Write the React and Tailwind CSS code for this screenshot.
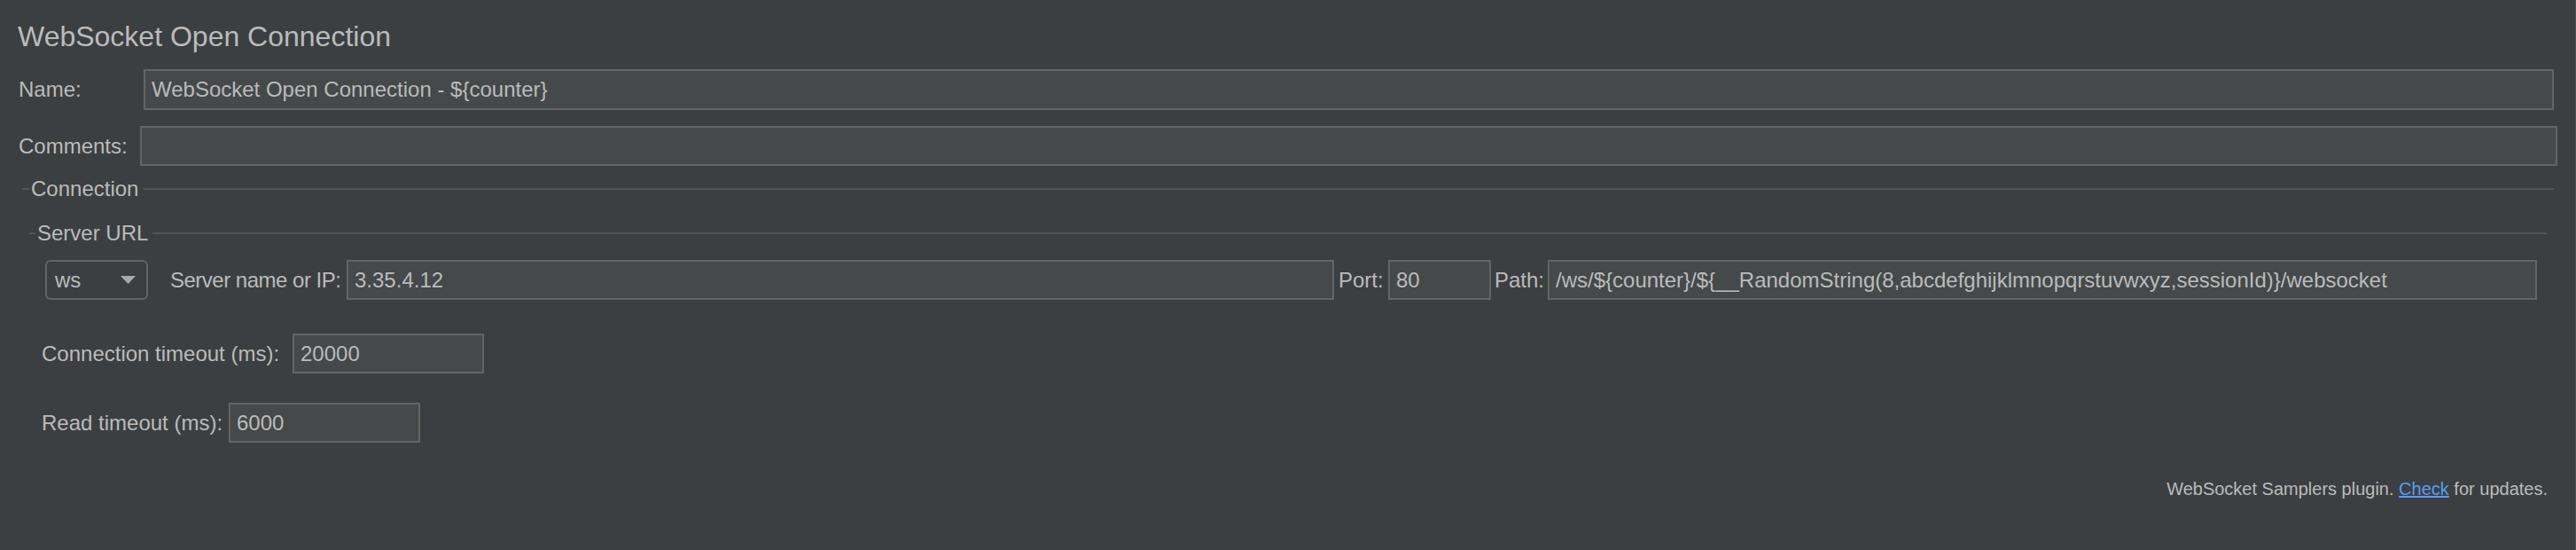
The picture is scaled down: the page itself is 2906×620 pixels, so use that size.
import React from 'react';

const font = { fontFamily: '"Liberation Sans", Arial, sans-serif' };

const Field = ({ value, className = '' }) => (
  <div className={`flex items-center h-[45px] border-2 border-[#646464] bg-[#45494a] pl-[7px] text-[24px] text-[#bbbbbb] whitespace-nowrap overflow-hidden ${className}`}>
    {value}
  </div>
);

const TitledLine = ({ title, className = '', dash = 'w-[8px]' }) => (
  <div className={`flex items-center h-[24px] ${className}`}>
    <div className={`${dash} h-[2px] bg-[#515355]`} />
    <span className="ml-[2px] text-[24px] leading-[24px] text-[#bbbbbb]">{title}</span>
    <div className="ml-[5px] flex-1 h-[2px] bg-[#515355]" />
  </div>
);

const App = () => {
  return (
    <div style={font} className="w-full h-[620px] bg-[#3c3f41] border-r border-[#4c4f51] flex flex-col text-[#bbbbbb]">
      <div className="mt-[22px] pl-[20px] h-[38px] text-[32px] leading-[38px]">WebSocket Open Connection</div>

      <div className="mt-[18px] pl-[21px] pr-[24px] flex items-center">
        <div className="w-[141px] text-[24px]">Name:</div>
        <Field className="flex-1 h-[46px]" value="WebSocket Open Connection - ${counter}" />
      </div>

      <div className="mt-[18px] pl-[21px] pr-[20px] flex items-center">
        <div className="w-[137px] text-[24px]">Comments:</div>
        <Field className="flex-1" value="" />
      </div>

      <TitledLine title="Connection" className="mt-[14px] pl-[25px] pr-[24px]" />
      <TitledLine title="Server URL" dash="w-[7px]" className="mt-[26px] pl-[33px] pr-[32px]" />

      <div className="mt-[18px] pl-[51px] flex items-center h-[45px]">
        <div className="w-[116px] h-[45px] border-2 border-[#646464] rounded-[6px] flex items-center justify-between pl-[9px] pr-[12px] text-[24px]">
          <span>ws</span>
          <svg width="17" height="10" viewBox="0 0 17 10">
            <polygon points="0,0 17,0 8.5,9" fill="#a9a9a9" />
          </svg>
        </div>
        <div className="ml-[25px] w-[199px] text-[24px] tracking-[-0.5px] whitespace-nowrap">Server name or IP:</div>
        <Field className="w-[1114px]" value="3.35.4.12" />
        <div className="w-[61px] pl-[5px] text-[24px]">Port:</div>
        <Field className="w-[116px]" value="80" />
        <div className="w-[64px] pl-[4px] text-[24px]">Path:</div>
        <Field className="w-[1116px]" value="/ws/${counter}/${__RandomString(8,abcdefghijklmnopqrstuvwxyz,sessionId)}/websocket" />
      </div>

      <div className="mt-[38px] pl-[47px] flex items-center">
        <div className="w-[283px] text-[24px] whitespace-nowrap">Connection timeout (ms):</div>
        <Field className="w-[216px]" value="20000" />
      </div>

      <div className="mt-[33px] pl-[47px] flex items-center">
        <div className="w-[211px] text-[24px] whitespace-nowrap">Read timeout (ms):</div>
        <Field className="w-[216px]" value="6000" />
      </div>

      <div className="mt-[40px] pr-[31px] text-right text-[20px] leading-[24px]">
        WebSocket Samplers plugin. <span className="text-[#589df6] underline">Check</span> for updates.
      </div>
    </div>
  );
};

export default App;
